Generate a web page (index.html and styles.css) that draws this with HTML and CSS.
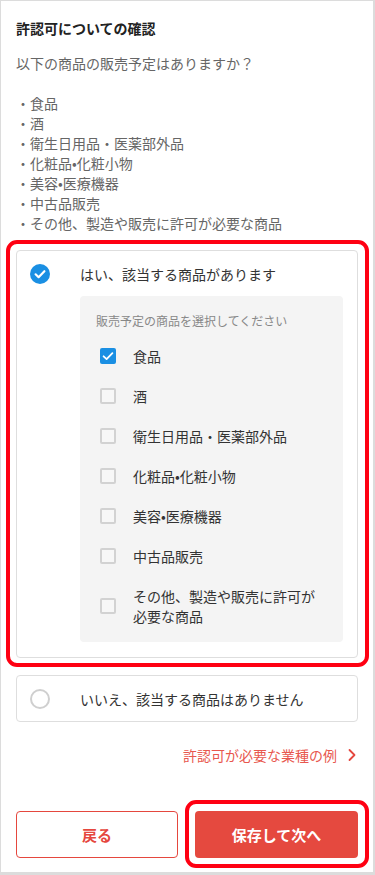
FILE: index.html
```html
<!DOCTYPE html>
<html lang="ja">
<head>
<meta charset="utf-8">
<link rel="stylesheet" href="styles.css">
</head>
<body>
<div class="frame">
  <h1 class="title">許認可についての確認</h1>
  <p class="question">以下の商品の販売予定はありますか？</p>
  <ul class="list">
    <li>・食品</li>
    <li>・酒</li>
    <li>・衛生日用品・医薬部外品</li>
    <li>・化粧品•化粧小物</li>
    <li>・美容•医療機器</li>
    <li>・中古品販売</li>
    <li>・その他、製造や販売に許可が必要な商品</li>
  </ul>

  <div class="card card-yes highlight">
    <div class="option">
      <span class="radio checked">
        <svg viewBox="0 0 20 20" width="20" height="20"><circle cx="10" cy="10" r="10" fill="#1a8fe3"/><path d="M5.6 10.3 L8.6 13.2 L14.4 7.2" fill="none" stroke="#fff" stroke-width="2.2" stroke-linecap="round" stroke-linejoin="round"/></svg>
      </span>
      <span class="option-text">はい、該当する商品があります</span>
    </div>
    <div class="panel">
      <div class="panel-label">販売予定の商品を選択してください</div>
      <div class="item"><span class="box checked"><svg viewBox="0 0 16 16" width="16" height="16"><path d="M3.6 8.3 L6.6 11.1 L12.4 5.1" fill="none" stroke="#fff" stroke-width="1.8" stroke-linecap="round" stroke-linejoin="round"/></svg></span><span class="item-text">食品</span></div>
      <div class="item"><span class="box"></span><span class="item-text">酒</span></div>
      <div class="item"><span class="box"></span><span class="item-text">衛生日用品・医薬部外品</span></div>
      <div class="item"><span class="box"></span><span class="item-text">化粧品•化粧小物</span></div>
      <div class="item"><span class="box"></span><span class="item-text">美容•医療機器</span></div>
      <div class="item"><span class="box"></span><span class="item-text">中古品販売</span></div>
      <div class="item"><span class="box"></span><span class="item-text">その他、製造や販売に許可が必要な商品</span></div>
    </div>
  </div>

  <div class="card card-no">
    <div class="option">
      <span class="radio"></span>
      <span class="option-text">いいえ、該当する商品はありません</span>
    </div>
  </div>

  <div class="link-row">
    <a class="link">許認可が必要な業種の例</a>
    <svg class="chev" viewBox="0 0 10 14" width="10" height="14"><path d="M2.5 2 L7.5 7 L2.5 12" fill="none" stroke="#e5473e" stroke-width="1.8" stroke-linecap="round" stroke-linejoin="round"/></svg>
  </div>

  <div class="buttons">
    <button class="btn btn-back">戻る</button>
    <button class="btn btn-next highlight">保存して次へ</button>
  </div>
</div>
</body>
</html>
```
FILE: styles.css
```css
* { box-sizing: border-box; }
html, body { margin: 0; padding: 0; background: #fff; }
body {
  font-family: "Noto Sans CJK JP", "Noto Sans", sans-serif;
  font-size: 14px;
  color: #333;
}
.frame {
  width: 375px;
  height: 875px;
  border: 1px solid #dcdcdc;
  border-right-width: 2px;
  border-bottom-width: 3px;
  padding: 17px 15px 0 15px;
  display: flex;
  flex-direction: column;
}
.title {
  margin: 0;
  font-size: 14px;
  line-height: 20px;
  font-weight: bold;
  color: #222;
}
.question {
  margin: 15px 0 0 0;
  line-height: 20px;
  color: #666;
}
.list {
  list-style: none;
  margin: 20px 0 0 0;
  padding: 0;
  color: #666;
  line-height: 20px;
}
.card {
  border: 1px solid #dedede;
  border-radius: 4px;
  background: #fff;
  width: 342px;
  position: relative;
}
.card-yes {
  margin-top: 17px;
  padding: 13px 14px 15px 13px;
}
.highlight::before {
  content: "";
  position: absolute;
  top: -11px;
  left: -11px;
  right: -12px;
  bottom: -10px;
  border: 4px solid #ff0012;
  border-radius: 11px;
  pointer-events: none;
}
.option {
  display: flex;
  align-items: center;
  height: 20px;
}
.radio {
  width: 20px;
  height: 20px;
  flex: none;
  border-radius: 50%;
  border: 2px solid #cfcfcf;
  display: block;
}
.radio.checked { border: none; }
.radio svg { display: block; }
.option-text {
  margin-left: 30px;
  color: #333;
  line-height: 20px;
}
.panel {
  margin: 12px 0 0 50px;
  background: #f4f4f4;
  border-radius: 4px;
  padding: 16px 16px 6px 16px;
}
.panel-label {
  font-size: 12px;
  line-height: 18px;
  color: #888;
  margin-bottom: 6px;
}
.item {
  display: flex;
  align-items: center;
  min-height: 40px;
  padding: 10px 0 10px 4px;
}
.box {
  width: 16px;
  height: 16px;
  flex: none;
  border: 2px solid #d2d2d2;
  border-radius: 2px;
  background: #f7f7f7;
  display: block;
}
.box.checked {
  background: #1a8fe3;
  border: none;
}
.box svg { display: block; }
.item-text {
  margin-left: 17px;
  line-height: 20px;
  color: #333;
}
.card-no {
  margin-top: 17px;
  height: 47px;
  padding: 0 13px;
  display: flex;
  align-items: center;
}
.link-row {
  margin-top: 23px;
  display: flex;
  justify-content: flex-end;
  align-items: center;
  padding-right: 1px;
  height: 20px;
}
.link {
  color: #e8574e;
  font-size: 14px;
  line-height: 20px;
}
.chev { margin-left: 10px; display: block; }
.buttons {
  margin-top: 46px;
  display: flex;
  gap: 17px;
}
.btn {
  font-family: "Noto Sans CJK JP", "Noto Sans", sans-serif;
  font-size: 15px;
  font-weight: bold;
  height: 47px;
  border-radius: 4px;
  position: relative;
}
.btn-back {
  width: 162px;
  background: #fff;
  color: #e5473e;
  border: 1px solid #e5473e;
}
.btn-next {
  width: 163px;
  background: #e5493f;
  color: #fff;
  border: none;
}
.btn-next::before {
  top: -11px;
  left: -10px;
  right: -11px;
  bottom: -10px;
}
```
